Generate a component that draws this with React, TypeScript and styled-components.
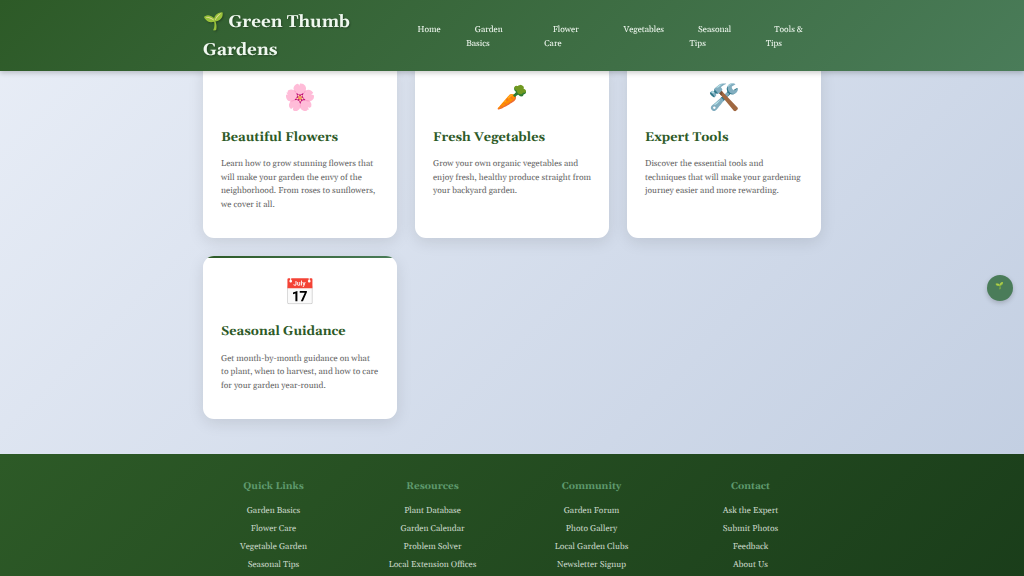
import React from 'react';
import styled, { createGlobalStyle } from 'styled-components';

const GlobalStyle = createGlobalStyle`
  html, body {
    margin: 0;
    height: 576px;
    overflow: hidden;
  }
  body {
    font-family: Georgia, "Gelasio", "Liberation Serif", serif;
    line-height: 1.6;
    text-rendering: geometricPrecision;
  }
  * { box-sizing: border-box; }
`;

const Page = styled.div`
  min-height: 576px;
  background: linear-gradient(135deg, #e9eef7 0%, #c3cfe2 100%);
  background-size: 100% 454px;
  background-repeat: no-repeat;
`;

const Header = styled.header`
  position: fixed;
  top: 0;
  left: 0;
  right: 0;
  z-index: 10;
  height: 71px;
  background: linear-gradient(135deg, #2d5a27 0%, #4a7c59 100%);
  box-shadow: 0 2px 5px rgba(0, 0, 0, 0.2);
`;

const HeaderInner = styled.div`
  width: 618px;
  height: 100%;
  margin: 0 auto;
  padding-top: 2px;
  display: flex;
  align-items: center;
  justify-content: space-between;
`;

const Logo = styled.div`
  width: 170px;
  flex-shrink: 0;
  font-size: 17.07px;
  line-height: 27.3px;
  font-weight: 700;
  color: #f0f8f0;
  text-shadow: 1px 1px 2px rgba(0, 0, 0, 0.3);
`;

const Nav = styled.nav`
  width: 412px;
  flex-shrink: 0;
`;

const NavList = styled.ul`
  list-style: none;
  margin: 0;
  padding: 0;
  display: flex;
  gap: 17px;
  font-size: 8.53px;
  line-height: 13.65px;
`;

const NavLink = styled.a`
  padding: 4px 8.53px;
  color: #f0f8f0;
`;

const Main = styled.main`
  width: 618px;
  margin: 0 auto;
  padding: 61px 0 35px;
`;

const CardGrid = styled.section`
  display: grid;
  grid-template-columns: repeat(3, 194px);
  gap: 18px;
`;

const Card = styled.article`
  position: relative;
  overflow: hidden;
  background: #fff;
  border-radius: 11px;
  padding: 17px 17.3px 26px 18px;
  box-shadow: 0 4px 16px rgba(0, 0, 0, 0.1);

  &::before {
    content: '';
    position: absolute;
    top: 0;
    left: 0;
    right: 0;
    height: 2px;
    background: linear-gradient(90deg, #2d5a27, #4a7c59);
  }
`;

const CardIcon = styled.div`
  font-size: 25.6px;
  line-height: 41px;
  text-align: center;
  margin-bottom: 8.5px;
`;

const CardTitle = styled.h3`
  margin: 0 0 9px;
  font-size: 12.8px;
  line-height: 20.5px;
  font-weight: 700;
  color: #2d5a27;
`;

const CardText = styled.p`
  margin: 0;
  font-size: 8.53px;
  line-height: 13.65px;
  color: #666;
`;

const Footer = styled.footer`
  background: linear-gradient(135deg, #2d5a27 0%, #1a3d1a 100%);
  padding: 26.5px 0 18px;
`;

const FooterGrid = styled.div`
  width: 618px;
  margin: 0 auto;
  display: grid;
  grid-template-columns: repeat(4, 141px);
  gap: 18px;
  text-align: center;
`;

const FooterTitle = styled.h4`
  margin: 0 0 6px;
  font-size: 9.85px;
  line-height: 15.7px;
  font-weight: 700;
  color: #5f9a6e;
`;

const FooterLink = styled.a`
  display: block;
  font-size: 8.53px;
  line-height: 18px;
  color: #c8d6c8;
`;

const FloatButton = styled.div`
  position: fixed;
  top: 275px;
  right: 11px;
  width: 26px;
  height: 26px;
  border-radius: 50%;
  background: #4a7c59;
  display: flex;
  align-items: center;
  justify-content: center;
  font-size: 7px;
  box-shadow: 0 2px 5px rgba(0, 0, 0, 0.2);
`;

const navItems = ['Home', 'Garden Basics', 'Flower Care', 'Vegetables', 'Seasonal Tips', 'Tools & Tips'];

const cards = [
  {
    icon: '🌸',
    title: 'Beautiful Flowers',
    text: 'Learn how to grow stunning flowers that will make your garden the envy of the neighborhood. From roses to sunflowers, we cover it all.',
  },
  {
    icon: '🥕',
    title: 'Fresh Vegetables',
    text: 'Grow your own organic vegetables and enjoy fresh, healthy produce straight from your backyard garden.',
  },
  {
    icon: '🛠️',
    title: 'Expert Tools',
    text: 'Discover the essential tools and techniques that will make your gardening journey easier and more rewarding.',
  },
  {
    icon: '📅',
    title: 'Seasonal Guidance',
    text: 'Get month-by-month guidance on what to\u00A0plant, when to harvest, and how to care for your garden year-round.',
  },
];

const footerColumns = [
  { title: 'Quick Links', links: ['Garden Basics', 'Flower Care', 'Vegetable Garden', 'Seasonal Tips'] },
  { title: 'Resources', links: ['Plant Database', 'Garden Calendar', 'Problem Solver', 'Local Extension Offices'] },
  { title: 'Community', links: ['Garden Forum', 'Photo Gallery', 'Local Garden Clubs', 'Newsletter Signup'] },
  { title: 'Contact', links: ['Ask the Expert', 'Submit Photos', 'Feedback', 'About Us'] },
];

const App: React.FC = () => {
  return (
    <Page>
      <GlobalStyle />
      <Header>
        <HeaderInner>
          <Logo>🌱 Green Thumb Gardens</Logo>
          <Nav>
            <NavList>
              {navItems.map((item) => (
                <li key={item}>
                  <NavLink>{item}</NavLink>
                </li>
              ))}
            </NavList>
          </Nav>
        </HeaderInner>
      </Header>
      <Main>
        <CardGrid>
          {cards.map((card) => (
            <Card key={card.title}>
              <CardIcon>{card.icon}</CardIcon>
              <CardTitle>{card.title}</CardTitle>
              <CardText>{card.text}</CardText>
            </Card>
          ))}
        </CardGrid>
      </Main>
      <Footer>
        <FooterGrid>
          {footerColumns.map((col) => (
            <div key={col.title}>
              <FooterTitle>{col.title}</FooterTitle>
              {col.links.map((link) => (
                <FooterLink key={link}>{link}</FooterLink>
              ))}
            </div>
          ))}
        </FooterGrid>
      </Footer>
      <FloatButton>🌱</FloatButton>
    </Page>
  );
};

export default App;
